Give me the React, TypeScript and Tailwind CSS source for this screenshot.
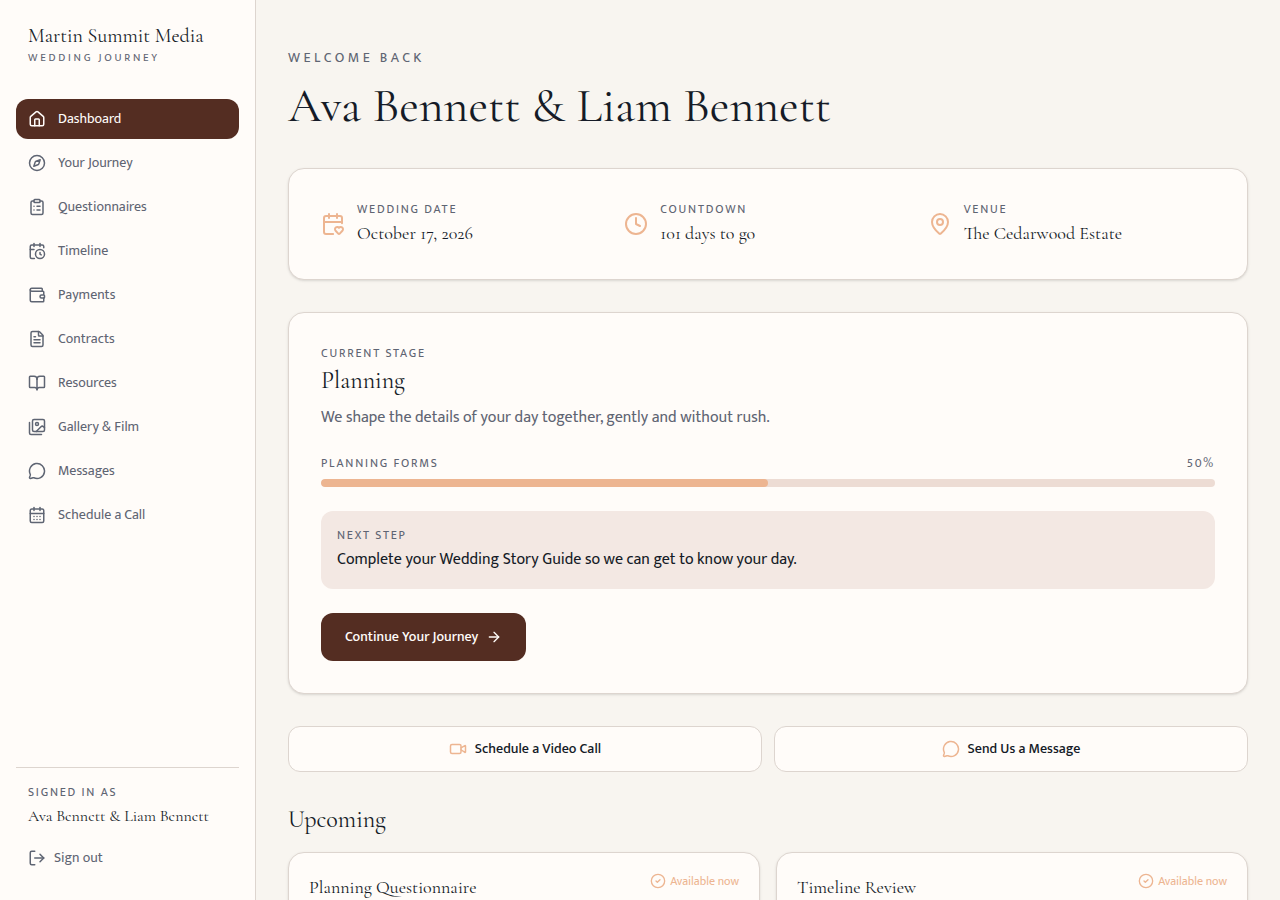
import type { ComponentType } from 'react';
import {
  ArrowRight,
  BookOpen,
  CalendarClock,
  CalendarDays,
  CalendarHeart,
  CircleCheck,
  ClipboardList,
  Clock,
  Compass,
  FileText,
  House,
  LogOut,
  MapPin,
  MessageCircle,
  Video,
  Wallet,
} from 'lucide-react';

type NavItem = {
  label: string;
  icon: ComponentType<{ size?: number }>;
  active?: boolean;
};

function GalleryIcon({ size = 24 }: { size?: number }) {
  return (
    <svg
      width={size}
      height={size}
      viewBox="0 0 24 24"
      fill="none"
      stroke="currentColor"
      strokeWidth={2}
      strokeLinecap="round"
      strokeLinejoin="round"
      aria-hidden="true"
    >
      <path d="M18 22H4a2 2 0 0 1-2-2V6" />
      <path d="m22 13-1.296-1.296a2.41 2.41 0 0 0-3.408 0L11 18" />
      <circle cx="12" cy="8" r="2" />
      <rect width="16" height="16" x="6" y="2" rx="2" />
    </svg>
  );
}

const navItems: NavItem[] = [
  { label: 'Dashboard', icon: House, active: true },
  { label: 'Your Journey', icon: Compass },
  { label: 'Questionnaires', icon: ClipboardList },
  { label: 'Timeline', icon: CalendarClock },
  { label: 'Payments', icon: Wallet },
  { label: 'Contracts', icon: FileText },
  { label: 'Resources', icon: BookOpen },
  { label: 'Gallery & Film', icon: GalleryIcon },
  { label: 'Messages', icon: MessageCircle },
  { label: 'Schedule a Call', icon: CalendarDays },
];

const facts = [
  { label: 'Wedding Date', value: 'October 17, 2026', icon: CalendarHeart },
  { label: 'Countdown', value: '101 days to go', icon: Clock },
  { label: 'Venue', value: 'The Cedarwood Estate', icon: MapPin },
];

const quickActions = [
  { label: 'Schedule a Video Call', icon: Video },
  { label: 'Send Us a Message', icon: MessageCircle },
];

const upcoming = ['Planning Questionnaire', 'Timeline Review'];

const couple = 'Ava Bennett & Liam Bennett';
const progress = 50;

const serif = "font-['Cormorant_Garamond','Liberation_Serif',serif]";
const eyebrow = 'text-xs leading-4 tracking-[0.15em] uppercase text-[#5f6573]';
const card = 'rounded-2xl border border-[#ddd5cf] bg-[#fffcf9] shadow-sm';

function Sidebar() {
  return (
    <aside className="sticky top-0 flex h-screen w-64 shrink-0 flex-col border-r border-[#ddd5cf] bg-[#fffcf9] px-4 py-6">
      <div className="mb-8 px-3">
        <p className={`${serif} text-xl leading-[25px]`}>Martin Summit Media</p>
        <p className="text-[11px] leading-[18px] tracking-[0.25em] uppercase text-[#5f6573]">Wedding Journey</p>
      </div>

      <nav className="flex flex-1 flex-col gap-1">
        {navItems.map((item) => (
          <a
            key={item.label}
            href="#"
            className={`flex h-10 items-center gap-3 rounded-xl px-3 text-sm ${
              item.active ? 'bg-[#542d22] text-[#fffcf9]' : 'text-[#5f6573]'
            }`}
          >
            <item.icon size={18} />
            {item.label}
          </a>
        ))}
      </nav>

      <div className="border-t border-[#ddd5cf] px-3 pt-4">
        <p className={eyebrow}>Signed in as</p>
        <p className={`${serif} mt-0.5 text-base leading-7`}>{couple}</p>
        <button type="button" className="mt-2.5 flex h-9 items-center gap-2 text-sm text-[#5f6573]">
          <LogOut size={18} />
          Sign out
        </button>
      </div>
    </aside>
  );
}

export default function App() {
  return (
    <div className="flex min-h-screen bg-[#f8f5f0] font-['Mukta','Noto_Sans',sans-serif] text-[#151b27]">
      <Sidebar />

      <main className="min-w-0 flex-1 px-8 py-12">
        <header className="mb-8">
          <p className="mb-2 text-sm leading-5 tracking-[0.25em] uppercase text-[#5f6573]">Welcome back</p>
          <h1 className={`${serif} text-5xl leading-[60px]`}>{couple}</h1>
        </header>

        {/* Wedding facts */}
        <section className={`${card} mb-8 grid grid-cols-3 gap-4 p-8`}>
          {facts.map((fact) => (
            <div key={fact.label} className="flex items-center gap-3">
              <fact.icon size={24} className="shrink-0 text-[#edb591]" />
              <div>
                <p className={eyebrow}>{fact.label}</p>
                <p className={`${serif} mt-0.5 text-lg leading-7`}>{fact.value}</p>
              </div>
            </div>
          ))}
        </section>

        {/* Current stage */}
        <section className={`${card} mb-8 p-8`}>
          <p className={eyebrow}>Current stage</p>
          <h2 className={`${serif} mt-0.5 text-2xl leading-9`}>Planning</h2>
          <p className="mt-1.5 text-base leading-[26px] text-[#5f6573]">
            We shape the details of your day together, gently and without rush.
          </p>

          <div className="mt-6 mb-2 flex items-center justify-between">
            <span className={eyebrow}>Planning forms</span>
            <span className={eyebrow}>{progress}%</span>
          </div>
          <div className="h-2 overflow-hidden rounded-full bg-[#eddcd4]">
            <div className="h-full rounded-full bg-[#edb591]" style={{ width: `${progress}%` }} />
          </div>

          <div className="mt-6 rounded-xl bg-[#f3e8e3] p-4">
            <p className={eyebrow}>Next step</p>
            <p className="mt-1 text-base leading-[26px]">
              Complete your Wedding Story Guide so we can get to know your day.
            </p>
          </div>

          <button
            type="button"
            className="mt-6 flex h-12 items-center gap-2 rounded-xl bg-[#542d22] px-6 text-sm font-medium text-[#fffcf9]"
          >
            Continue Your Journey
            <ArrowRight size={16} />
          </button>
        </section>

        {/* Quick actions */}
        <div className="mb-8 grid grid-cols-2 gap-3">
          {quickActions.map((action) => (
            <button
              key={action.label}
              type="button"
              className="flex items-center justify-center gap-2 rounded-xl border border-[#ddd5cf] bg-[#fffcf9] py-3 text-sm leading-5 font-medium"
            >
              <action.icon size={18} className="text-[#edb591]" />
              {action.label}
            </button>
          ))}
        </div>

        {/* Upcoming */}
        <h2 className={`${serif} mb-4 text-2xl leading-8`}>Upcoming</h2>
        <div className="grid grid-cols-2 gap-4">
          {upcoming.map((title) => (
            <article key={title} className={`${card} flex min-h-32 items-start justify-between p-5`}>
              <h3 className={`${serif} text-lg leading-7`}>{title}</h3>
              <span className="flex items-center gap-1 text-xs leading-4 text-[#edb591]">
                <CircleCheck size={16} />
                Available now
              </span>
            </article>
          ))}
        </div>
      </main>
    </div>
  );
}
